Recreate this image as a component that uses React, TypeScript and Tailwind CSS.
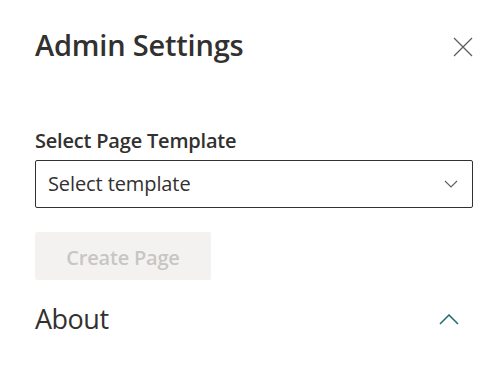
import React from "react";

function CloseIcon() {
    return (
        <svg width="20" height="20" viewBox="0 0 20 20" aria-hidden="true">
            <path d="M1 1 L19 19 M19 1 L1 19" stroke="#605e5c" strokeWidth="1.3" fill="none" />
        </svg>
    );
}

function ChevronDown() {
    return (
        <svg width="14" height="8" viewBox="0 0 14 8" aria-hidden="true">
            <path d="M1 1 L7 7 L13 1" stroke="#605e5c" strokeWidth="1.1" fill="none" />
        </svg>
    );
}

function ChevronUp() {
    return (
        <svg width="20" height="11" viewBox="0 0 20 11" aria-hidden="true">
            <path d="M1 10 L10 1 L19 10" stroke="#1d6b73" strokeWidth="1.5" fill="none" />
        </svg>
    );
}

export default function App() {
    return (
        <div className="h-[378px] w-[504px] bg-white pl-[35px] pr-[31px] font-['Segoe_UI','Open_Sans',sans-serif] text-[#323130]">
            <div className="flex items-start justify-between pt-[25px]">
                <h1 className="text-[29px] font-semibold leading-[40px] tracking-[-0.2px]">
                    Admin Settings
                </h1>
                <button className="mt-[12px]">
                    <CloseIcon />
                </button>
            </div>

            <div className="mt-[63px]">
                <label className="block text-[20px] font-semibold leading-[26px] tracking-[-0.2px]">
                    Select Page Template
                </label>
                <div className="mt-[6px] flex h-[48px] items-center justify-between rounded-[2px] border border-[#323130] pl-[12px] pr-[14px]">
                    <span className="text-[20px] leading-[26px] tracking-[-0.1px]">Select template</span>
                    <ChevronDown />
                </div>
            </div>

            <button
                disabled
                className="mt-[24px] h-[48px] w-[176px] rounded-[2px] bg-[#f3f2f1] pt-[3px] text-[20px] font-semibold tracking-[-0.2px] text-[#c8c6c4]"
            >
                Create Page
            </button>

            <div className="mt-[19px] flex items-center justify-between pr-[14px]">
                <h2 className="text-[27px] leading-[40px] tracking-[-0.5px]">About</h2>
                <ChevronUp />
            </div>
        </div>
    );
}
